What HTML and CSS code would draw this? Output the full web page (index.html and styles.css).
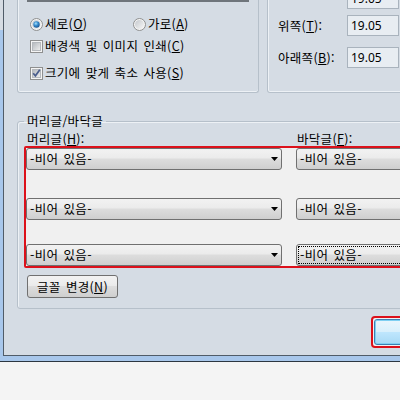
FILE: index.html
```html
<!DOCTYPE html>
<html lang="ko">
<head>
  <meta charset="UTF-8">
  <title>페이지 설정</title>
  <link rel="stylesheet" href="styles.css">
</head>
<body>
  <div class="frame">
    <div class="dialog">
      <div class="top-row">
        <div class="group orient">
          <div class="preview-edge"></div>
          <div class="opt-row r1">
            <label class="opt opt-wide">
              <svg class="radio" width="13" height="13" viewBox="0 0 13 13">
                <defs>
                  <linearGradient id="rg1" x1="0" y1="0" x2="1" y2="1"><stop offset="0" stop-color="#c4c8cd"/><stop offset="1" stop-color="#f7f7f7"/></linearGradient>
                  <radialGradient id="rdot" cx="0.4" cy="0.35" r="0.7"><stop offset="0" stop-color="#a9e2fb"/><stop offset="0.45" stop-color="#3a8fd0"/><stop offset="1" stop-color="#174f8c"/></radialGradient>
                </defs>
                <circle cx="6.5" cy="6.5" r="6" fill="#f4f4f4" stroke="#8e8f8f"/>
                <circle cx="6.5" cy="6.5" r="4.5" fill="url(#rg1)"/>
                <circle cx="6.5" cy="6.5" r="3.2" fill="url(#rdot)"/>
              </svg>
              <span>세로(<u>O</u>)</span>
            </label>
            <label class="opt">
              <svg class="radio" width="13" height="13" viewBox="0 0 13 13">
                <defs>
                  <linearGradient id="rg2" x1="0" y1="0" x2="1" y2="1"><stop offset="0" stop-color="#c4c8cd"/><stop offset="1" stop-color="#f7f7f7"/></linearGradient>
                </defs>
                <circle cx="6.5" cy="6.5" r="6" fill="#f4f4f4" stroke="#8e8f8f"/>
                <circle cx="6.5" cy="6.5" r="4.5" fill="url(#rg2)"/>
              </svg>
              <span>가로(<u>A</u>)</span>
            </label>
          </div>
          <div class="opt-row r2">
            <label class="opt">
              <svg class="check" width="13" height="13" viewBox="0 0 13 13">
                <defs>
                  <linearGradient id="cg1" x1="0" y1="0" x2="1" y2="1"><stop offset="0" stop-color="#b3b7bc"/><stop offset="1" stop-color="#efefef"/></linearGradient>
                </defs>
                <rect x="0.5" y="0.5" width="12" height="12" fill="#f4f4f4" stroke="#8e8f8f"/>
                <rect x="2.5" y="2.5" width="8" height="8" fill="url(#cg1)" stroke="#b5b9bd"/>
              </svg>
              <span>배경색 및 이미지 인쇄(<u>C</u>)</span>
            </label>
          </div>
          <div class="opt-row r3">
            <label class="opt">
              <svg class="check" width="13" height="13" viewBox="0 0 13 13">
                <defs>
                  <linearGradient id="cg2" x1="0" y1="0" x2="1" y2="1"><stop offset="0" stop-color="#b3b7bc"/><stop offset="1" stop-color="#efefef"/></linearGradient>
                </defs>
                <rect x="0.5" y="0.5" width="12" height="12" fill="#f4f4f4" stroke="#8e8f8f"/>
                <rect x="2.5" y="2.5" width="8" height="8" fill="url(#cg2)" stroke="#b5b9bd"/>
                <path d="M3.2 6.3 L5.4 8.8 L9.8 2.8" fill="none" stroke="#4a5d8c" stroke-width="1.7"/>
              </svg>
              <span>크기에 맞게 축소 사용(<u>S</u>)</span>
            </label>
          </div>
        </div>
        <div class="group margins">
          <div class="field f1"><span class="field-label"></span><span class="num">19.05</span></div>
          <div class="field f2"><span class="field-label">위쪽(<u>T</u>):</span><span class="num">19.05</span></div>
          <div class="field f3"><span class="field-label">아래쪽(<u>B</u>):</span><span class="num">19.05</span></div>
        </div>
      </div>

      <fieldset class="hf">
        <legend>머리글/바닥글</legend>
        <div class="hf-labels">
          <span class="hf-left">머리글(<u>H</u>):</span>
          <span>바닥글(<u>F</u>):</span>
        </div>
        <div class="slots">
          <div class="slot-row">
            <div class="combo wide"><span>-비어 있음-</span><svg width="7" height="4" viewBox="0 0 7 4"><path d="M0 0H7L3.5 4Z" fill="#000"/></svg></div>
            <div class="combo narrow"><span>-비어 있음-</span></div>
          </div>
          <div class="slot-row">
            <div class="combo wide"><span>-비어 있음-</span><svg width="7" height="4" viewBox="0 0 7 4"><path d="M0 0H7L3.5 4Z" fill="#000"/></svg></div>
            <div class="combo narrow"><span>-비어 있음-</span></div>
          </div>
          <div class="slot-row">
            <div class="combo wide"><span>-비어 있음-</span><svg width="7" height="4" viewBox="0 0 7 4"><path d="M0 0H7L3.5 4Z" fill="#000"/></svg></div>
            <div class="combo narrow focused"><span class="focus">-비어 있음-</span></div>
          </div>
        </div>
        <button class="btn" type="button">글꼴 변경(<u>N</u>)</button>
      </fieldset>

      <div class="actions">
        <span class="ok-ring"><span class="ok"></span></span>
      </div>
    </div>
  </div>
</body>
</html>
```

FILE: styles.css
```css
body {
  margin: 0;
  background: #f4f4f4;
  font-family: "Noto Sans CJK KR", "Noto Sans", sans-serif;
  font-size: 12.5px;
  letter-spacing: 0.3px;
  word-spacing: 1.5px;
  color: #000;
}
u {
  text-decoration-thickness: 1px;
  text-underline-offset: 1px;
}
.frame {
  width: 400px;
  height: 362px;
  box-sizing: border-box;
  overflow: hidden;
  padding: 0 0 5px 3px;
  background: linear-gradient(#d6dce3 0 30px, #a8c7eb 30px);
  border-bottom: 1px solid #2c3641;
}
.dialog {
  width: 600px;
  height: 356px;
  box-sizing: border-box;
  background: #d5dce4;
  border-left: 1px solid #505c68;
  border-bottom: 1px solid #505c68;
  padding-left: 13px;
}

/* top groups */
.top-row {
  display: flex;
  gap: 8px;
}
.group {
  height: 93px;
  box-sizing: border-box;
  border: 1px solid #b6c0ca;
  border-top: 0;
  border-radius: 0 0 3px 3px;
  box-shadow: inset 1px 0 0 #edf1f5, inset 0 -1px 0 #edf1f5;
}
.orient {
  width: 242px;
}
.margins {
  width: 250px;
}
.preview-edge {
  height: 2px;
  margin: 0 9px;
  background: #6f757b;
}
.opt-row {
  display: flex;
  align-items: center;
  height: 16px;
  padding-left: 12px;
  line-height: 16px;
}
.r1 { margin-top: 14px; }
.r2 { margin-top: 6px; }
.r3 { margin-top: 11px; }
.opt {
  display: flex;
  align-items: center;
  gap: 2px;
  white-space: nowrap;
}
.opt-wide {
  width: 103px;
}
.radio, .check {
  flex: none;
  display: block;
}

.field {
  display: flex;
  align-items: center;
  height: 21px;
  padding-left: 10px;
}
.f1 { margin-top: -12px; }
.f2 { margin-top: 6px; }
.f3 { margin-top: 11px; }
.field-label {
  width: 69px;
  line-height: 16px;
  white-space: nowrap;
}
.num {
  width: 52px;
  height: 21px;
  box-sizing: border-box;
  border: 1px solid #a9b3bd;
  background: #e8edf2;
  padding-left: 3px;
  font-family: "Noto Sans", sans-serif;
  font-size: 12px;
  letter-spacing: 0;
  line-height: 19px;
}

/* header / footer */
.hf {
  width: 500px;
  box-sizing: border-box;
  margin: 20px 0 0;
  padding: 0 0 10px 6px;
  border: 1px solid #b6c0ca;
  border-radius: 3px;
  box-shadow: inset 1px 1px 0 #edf1f5;
  min-width: 0;
}
.hf legend {
  padding: 0 3px;
  line-height: 16px;
}
.hf-labels {
  display: flex;
  height: 15px;
  line-height: 15px;
  margin-top: 2px;
}
.hf-left {
  width: 270px;
  margin-left: 3px;
}
.slots {
  border: 2px solid #dc111b;
  border-radius: 2px;
  background: #f0f0f0;
}
.slot-row {
  display: flex;
  gap: 14px;
}
.slot-row:nth-child(2) { margin-top: 28px; }
.slot-row:nth-child(3) { margin-top: 24px; }
.combo {
  height: 22px;
  box-sizing: border-box;
  display: flex;
  align-items: center;
  padding: 0 3px;
  border: 1px solid #707070;
  border-radius: 3px;
  background: linear-gradient(#f2f2f2 0%, #ebebeb 45%, #dddddd 50%, #cfcfcf 100%);
  line-height: 16px;
  white-space: nowrap;
}
.combo.wide {
  width: 256px;
  justify-content: space-between;
}
.combo.wide svg {
  display: block;
}
.combo.narrow {
  width: 140px;
}
.combo.focused {
  padding: 1px;
  align-items: stretch;
}
.focus {
  flex: 1;
  border: 1px dotted #000;
  padding-left: 1px;
  line-height: 16px;
}
.btn {
  display: block;
  margin: 7px 0 0 3px;
  width: 91px;
  height: 23px;
  padding: 0;
  border: 1px solid #707070;
  border-radius: 3px;
  background: linear-gradient(#f2f2f2 0%, #ebebeb 45%, #dddddd 50%, #cfcfcf 100%);
  font: inherit;
  letter-spacing: inherit;
  word-spacing: inherit;
  line-height: 16px;
  color: #000;
}

/* dialog buttons */
.actions {
  margin: 7px 0 0 354px;
}
.ok-ring {
  display: block;
  width: 82px;
  height: 32px;
  box-sizing: border-box;
  padding: 1px;
  border: 2px solid #dc101a;
  border-radius: 4px;
  background: #eef1f4;
}
.ok {
  display: block;
  height: 26px;
  box-sizing: border-box;
  border: 1px solid #3c7fb1;
  border-radius: 3px;
  background: linear-gradient(#eaf6fd 0%, #d9f0fc 48%, #bee6fd 52%, #a7d9f5 100%);
  box-shadow: inset 0 0 0 1px #7fd0f3;
}
```
